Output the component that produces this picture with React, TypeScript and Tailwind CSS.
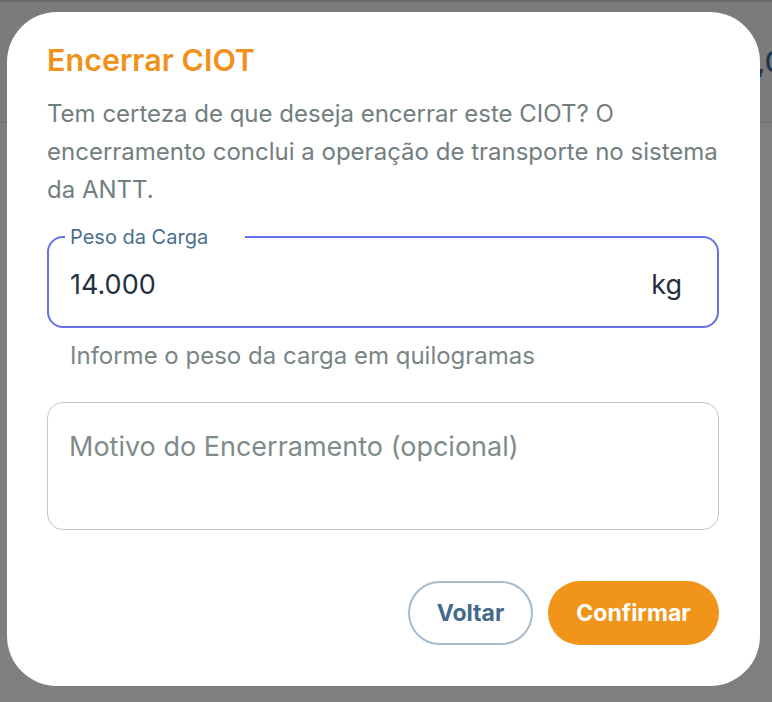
import React from "react";

export default function App() {
  return (
    <div className="relative h-[702px] w-[772px] overflow-hidden bg-[#7f7f7f] font-['Inter',sans-serif]">
      {/* page behind the overlay */}
      <div className="h-[2px] bg-[#6c6c6c]" />
      <header className="flex h-[121px] items-center justify-end overflow-hidden border-b border-[#707070] bg-[#7b7b7b]">
        <span className="mr-[-29px] whitespace-nowrap text-[28px] font-medium text-[#1c3450]">
          R$ 1.250,00
        </span>
      </header>

      {/* dialog */}
      <div className="absolute left-[7px] top-[12px] w-[753px] rounded-[50px] bg-white pb-[41px] pl-[40px] pr-[41px] pt-[30px]">
        <h2 className="text-[30.5px] font-semibold leading-[36px] text-[#f0921a]">
          Encerrar CIOT
        </h2>
        <p className="mt-[17px] text-[24px] leading-[38px] text-[#737e7f]">
          Tem certeza de que deseja encerrar este CIOT? O encerramento conclui a
          operação de transporte no sistema da ANTT.
        </p>

        <fieldset className="mt-[16px] rounded-[16px] border-2 border-[#6570e6]">
          <legend className="ml-[16px] pl-[5px] pr-[37px] text-[20px] leading-[24px] text-[#4b6f8f]">
            Peso da Carga
          </legend>
          <div className="flex h-[77px] items-center pb-[5px] pl-[21px] pr-[35px] text-[27px] text-[#252f3d]">
            <span className="flex-1">14.000</span>
            <span>kg</span>
          </div>
        </fieldset>
        <p className="ml-[23px] mt-[14px] text-[24px] leading-[28px] text-[#7a8586]">
          Informe o peso da carga em quilogramas
        </p>

        <textarea
          className="mt-[32px] block h-[128px] w-full resize-none rounded-[16px] border-[1.5px] border-[#c6c6c6] px-[21px] pt-[27px] text-[27px] leading-[34px] outline-none placeholder:text-[#7f8b8b]"
          placeholder="Motivo do Encerramento (opcional)"
        />

        <div className="mt-[51px] flex justify-end gap-[15px]">
          <button className="h-[64px] w-[125px] rounded-full border-2 border-[#a7bbcf] text-[23px] font-bold text-[#45698c]">
            Voltar
          </button>
          <button className="h-[64px] w-[171px] rounded-full bg-[#f0951a] text-[23px] font-bold text-white">
            Confirmar
          </button>
        </div>
      </div>
    </div>
  );
}
